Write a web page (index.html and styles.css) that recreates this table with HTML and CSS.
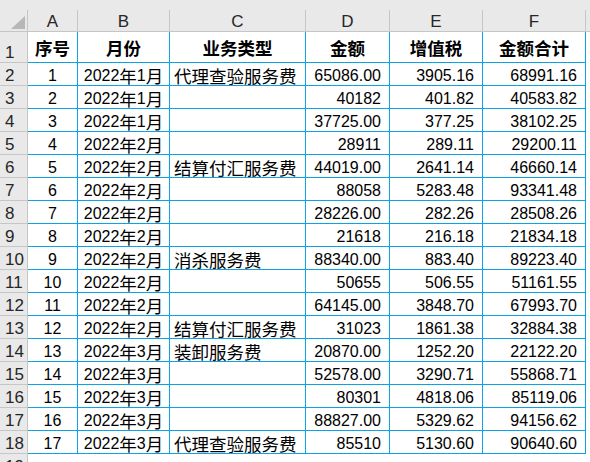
FILE: index.html
```html
<!DOCTYPE html>
<html lang="zh-CN">
<head>
<meta charset="utf-8">
<title>Sheet</title>
<link rel="stylesheet" href="styles.css">
</head>
<body>
<div class="top"></div>
<div class="sheet">
  <div class="ch corner"><svg width="14" height="13" viewBox="0 0 14 13"><polygon points="14,0 14,13 0,13" fill="#b7b7b7"/></svg></div>
  <div class="ch">A</div><div class="ch">B</div><div class="ch">C</div><div class="ch">D</div><div class="ch">E</div><div class="ch">F</div><div class="ch g"></div>

  <div class="rh">1</div>
  <div class="c ctr hd"><span class="z b">序号</span></div><div class="c ctr hd"><span class="z b">月份</span></div><div class="c ctr hd"><span class="z b">业务类型</span></div><div class="c ctr hd"><span class="z b">金额</span></div><div class="c ctr hd"><span class="z b">增值税</span></div><div class="c ctr hd"><span class="z b">金额合计</span></div><div class="g"></div>

  <div class="rh">2</div><div class="c ctr">1</div><div class="c ctr">2022<span class="z">年</span>1<span class="z">月</span></div><div class="c txt"><span class="z">代理查验服务费</span></div><div class="c num">65086.00</div><div class="c num">3905.16</div><div class="c num">68991.16</div><div class="g"></div>
  <div class="rh">3</div><div class="c ctr">2</div><div class="c ctr">2022<span class="z">年</span>1<span class="z">月</span></div><div class="c txt"></div><div class="c num">40182</div><div class="c num">401.82</div><div class="c num">40583.82</div><div class="g"></div>
  <div class="rh">4</div><div class="c ctr">3</div><div class="c ctr">2022<span class="z">年</span>1<span class="z">月</span></div><div class="c txt"></div><div class="c num">37725.00</div><div class="c num">377.25</div><div class="c num">38102.25</div><div class="g"></div>
  <div class="rh">5</div><div class="c ctr">4</div><div class="c ctr">2022<span class="z">年</span>2<span class="z">月</span></div><div class="c txt"></div><div class="c num">28911</div><div class="c num">289.11</div><div class="c num">29200.11</div><div class="g"></div>
  <div class="rh">6</div><div class="c ctr">5</div><div class="c ctr">2022<span class="z">年</span>2<span class="z">月</span></div><div class="c txt"><span class="z">结算付汇服务费</span></div><div class="c num">44019.00</div><div class="c num">2641.14</div><div class="c num">46660.14</div><div class="g"></div>
  <div class="rh">7</div><div class="c ctr">6</div><div class="c ctr">2022<span class="z">年</span>2<span class="z">月</span></div><div class="c txt"></div><div class="c num">88058</div><div class="c num">5283.48</div><div class="c num">93341.48</div><div class="g"></div>
  <div class="rh">8</div><div class="c ctr">7</div><div class="c ctr">2022<span class="z">年</span>2<span class="z">月</span></div><div class="c txt"></div><div class="c num">28226.00</div><div class="c num">282.26</div><div class="c num">28508.26</div><div class="g"></div>
  <div class="rh">9</div><div class="c ctr">8</div><div class="c ctr">2022<span class="z">年</span>2<span class="z">月</span></div><div class="c txt"></div><div class="c num">21618</div><div class="c num">216.18</div><div class="c num">21834.18</div><div class="g"></div>
  <div class="rh">10</div><div class="c ctr">9</div><div class="c ctr">2022<span class="z">年</span>2<span class="z">月</span></div><div class="c txt"><span class="z">消杀服务费</span></div><div class="c num">88340.00</div><div class="c num">883.40</div><div class="c num">89223.40</div><div class="g"></div>
  <div class="rh">11</div><div class="c ctr">10</div><div class="c ctr">2022<span class="z">年</span>2<span class="z">月</span></div><div class="c txt"></div><div class="c num">50655</div><div class="c num">506.55</div><div class="c num">51161.55</div><div class="g"></div>
  <div class="rh">12</div><div class="c ctr">11</div><div class="c ctr">2022<span class="z">年</span>2<span class="z">月</span></div><div class="c txt"></div><div class="c num">64145.00</div><div class="c num">3848.70</div><div class="c num">67993.70</div><div class="g"></div>
  <div class="rh">13</div><div class="c ctr">12</div><div class="c ctr">2022<span class="z">年</span>2<span class="z">月</span></div><div class="c txt"><span class="z">结算付汇服务费</span></div><div class="c num">31023</div><div class="c num">1861.38</div><div class="c num">32884.38</div><div class="g"></div>
  <div class="rh">14</div><div class="c ctr">13</div><div class="c ctr">2022<span class="z">年</span>3<span class="z">月</span></div><div class="c txt"><span class="z">装卸服务费</span></div><div class="c num">20870.00</div><div class="c num">1252.20</div><div class="c num">22122.20</div><div class="g"></div>
  <div class="rh">15</div><div class="c ctr">14</div><div class="c ctr">2022<span class="z">年</span>3<span class="z">月</span></div><div class="c txt"></div><div class="c num">52578.00</div><div class="c num">3290.71</div><div class="c num">55868.71</div><div class="g"></div>
  <div class="rh">16</div><div class="c ctr">15</div><div class="c ctr">2022<span class="z">年</span>3<span class="z">月</span></div><div class="c txt"></div><div class="c num">80301</div><div class="c num">4818.06</div><div class="c num">85119.06</div><div class="g"></div>
  <div class="rh">17</div><div class="c ctr">16</div><div class="c ctr">2022<span class="z">年</span>3<span class="z">月</span></div><div class="c txt"></div><div class="c num">88827.00</div><div class="c num">5329.62</div><div class="c num">94156.62</div><div class="g"></div>
  <div class="rh">18</div><div class="c ctr">17</div><div class="c ctr">2022<span class="z">年</span>3<span class="z">月</span></div><div class="c txt"><span class="z">代理查验服务费</span></div><div class="c num">85510</div><div class="c num">5130.60</div><div class="c num">90640.60</div><div class="g"></div>

  <div class="rh">19</div><div class="e"></div><div class="e"></div><div class="e"></div><div class="e"></div><div class="e"></div><div class="e"></div><div class="g"></div>
</div>
</body>
</html>
```

FILE: styles.css
```css
html, body {
  margin: 0;
  padding: 0;
  background: #ffffff;
  overflow: hidden;
}

.top {
  height: 10px;
  background: #e9e9e9;
}

.sheet {
  display: grid;
  grid-template-columns: 28px 50px 92px 136px 84px 93px 103px 5px;
  grid-template-rows: 22px 31px repeat(17, 23px) 23px;
  font-family: "Liberation Sans", sans-serif;
  font-size: 16px;
  color: #000000;
}

.sheet > div {
  box-sizing: border-box;
  display: flex;
  align-items: flex-end;
  line-height: 19px;
  white-space: nowrap;
}

.sheet > .ch {
  background: #e9e9e9;
  border-right: 1px solid #c6c6c6;
  border-bottom: 1px solid #c6c6c6;
  justify-content: center;
  color: #262626;
  font-size: 17px;
}

.sheet > .corner {
  justify-content: flex-end;
  padding: 0 2px 2px 0;
}

.corner svg {
  display: block;
}

.sheet > .ch.g {
  border-right: none;
}

.sheet > .rh {
  background: #e9e9e9;
  border-right: 1px solid #c6c6c6;
  border-bottom: 1px solid #c6c6c6;
  padding-left: 5px;
  color: #262626;
  font-size: 17px;
  overflow: hidden;
}

.sheet > .c {
  border-right: 1px solid #0aa4e4;
  border-bottom: 1px solid #0aa4e4;
}

.sheet > .ctr {
  justify-content: center;
}

.sheet > .hd {
  align-items: center;
}

.sheet > .num {
  justify-content: flex-end;
  padding-right: 8px;
}

.sheet > .txt {
  padding-left: 4px;
}

.z {
  font-family: "Noto Sans CJK SC", sans-serif;
  font-size: 17.5px;
  line-height: 19px;
}

.b {
  font-weight: 700;
}
```
